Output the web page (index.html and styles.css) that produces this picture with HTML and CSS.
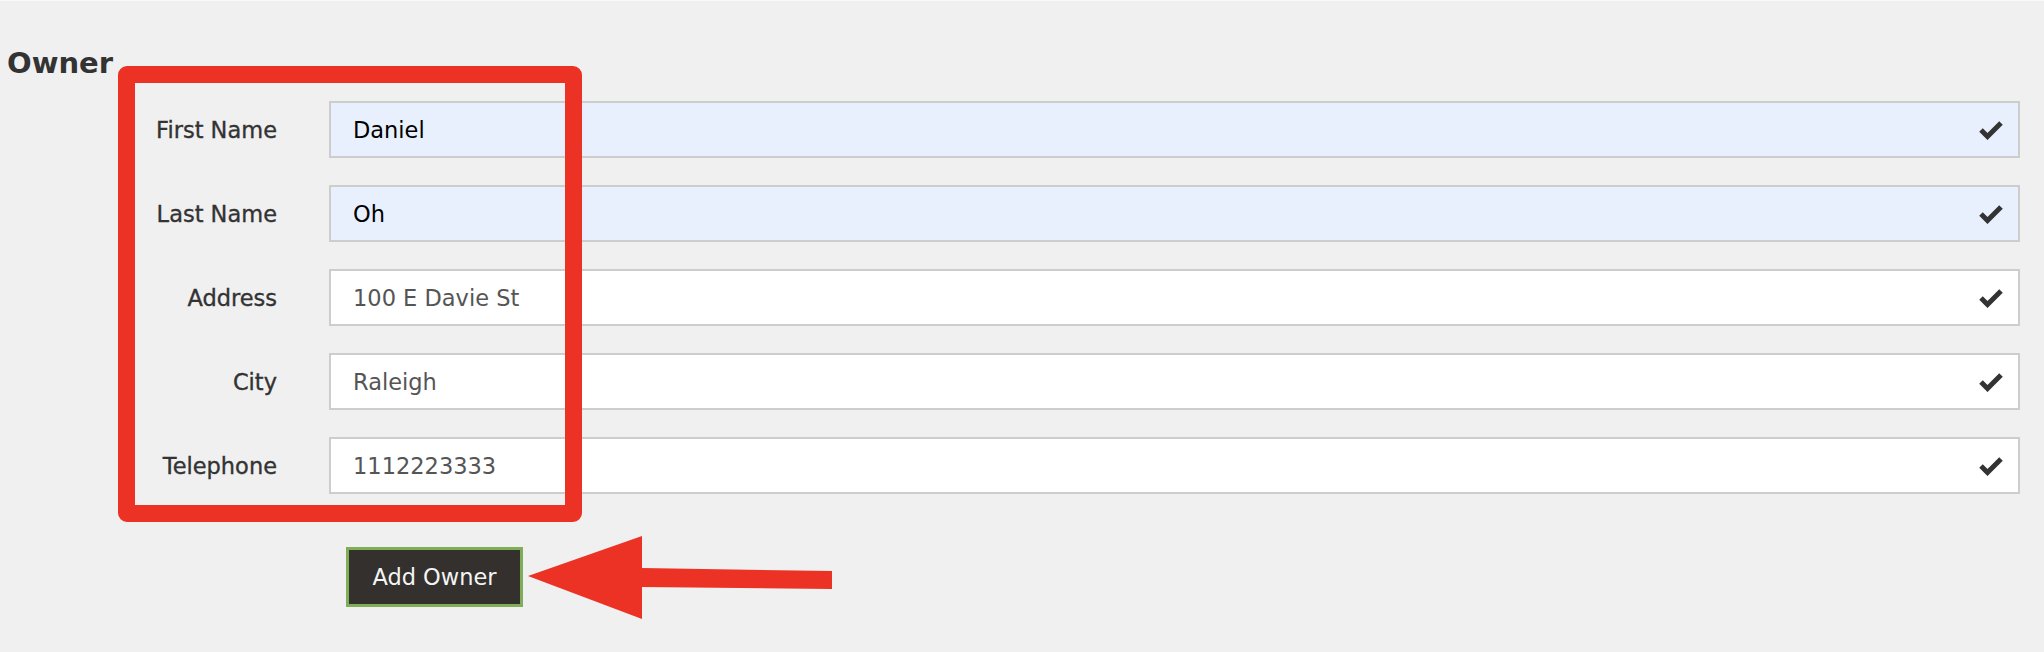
FILE: index.html
```html
<!DOCTYPE html>
<html lang="en">
<head>
<meta charset="utf-8">
<title>Owner</title>
<link rel="stylesheet" href="styles.css">
</head>
<body>
<main class="page">
  <h2 class="title">Owner</h2>
  <form class="owner-form">
    <div class="row">
      <label class="label">First Name</label>
      <div class="field autofill"><span class="value">Daniel</span><svg class="check" viewBox="0 0 24 20"><polyline points="2,10 8.5,16.5 22,3"/></svg></div>
    </div>
    <div class="row">
      <label class="label">Last Name</label>
      <div class="field autofill"><span class="value">Oh</span><svg class="check" viewBox="0 0 24 20"><polyline points="2,10 8.5,16.5 22,3"/></svg></div>
    </div>
    <div class="row">
      <label class="label">Address</label>
      <div class="field"><span class="value">100 E Davie St</span><svg class="check" viewBox="0 0 24 20"><polyline points="2,10 8.5,16.5 22,3"/></svg></div>
    </div>
    <div class="row">
      <label class="label">City</label>
      <div class="field"><span class="value">Raleigh</span><svg class="check" viewBox="0 0 24 20"><polyline points="2,10 8.5,16.5 22,3"/></svg></div>
    </div>
    <div class="row">
      <label class="label">Telephone</label>
      <div class="field"><span class="value">1112223333</span><svg class="check" viewBox="0 0 24 20"><polyline points="2,10 8.5,16.5 22,3"/></svg></div>
    </div>
    <div class="actions">
      <button type="button" class="btn">Add Owner</button>
    </div>
  </form>
  <div class="callout-box"></div>
  <svg class="callout-arrow" viewBox="0 0 320 95"><polygon points="8,46 122,6 122,38 312,41 312,59 122,57 122,89"/></svg>
</main>
</body>
</html>
```

FILE: styles.css
```css
html, body {
  margin: 0;
  padding: 0;
}

body {
  background: #f0f0f0;
  font-family: "DejaVu Sans", "Liberation Sans", sans-serif;
  color: #333;
}

.page {
  position: relative;
  height: 652px;
  box-sizing: border-box;
  padding: 48px 24px 0 7px;
  border-top: 1px solid #fafafa;
}

.title {
  margin: 0;
  font-size: 29px;
  line-height: 29px;
  font-weight: 700;
  color: #333;
}

.owner-form {
  margin-top: 23px;
  display: flex;
  flex-direction: column;
  gap: 27px;
}

.row {
  display: grid;
  grid-template-columns: 270px 1fr;
  column-gap: 52px;
  align-items: center;
}

.label {
  text-align: right;
  font-size: 22.5px;
  color: #333;
  -webkit-text-stroke: 0.35px #333;
}

.field {
  height: 57px;
  box-sizing: border-box;
  border: 2px solid #cdcdcd;
  background: #fff;
  display: flex;
  align-items: center;
  justify-content: space-between;
  padding: 0 15px 0 22px;
}

.field.autofill {
  background: #e8f0fe;
}

.value {
  font-size: 22.5px;
  color: #555;
}

.autofill .value {
  color: #000;
}

.check {
  width: 24px;
  height: 20px;
}

.check polyline {
  fill: none;
  stroke: #333;
  stroke-width: 5;
}

.actions {
  margin-top: 26px;
  padding-left: 339px;
}

.btn {
  width: 177px;
  height: 60px;
  box-sizing: border-box;
  padding: 0;
  background: #33302d;
  border: 3px solid #80ae58;
  color: #f4f4f4;
  font-family: "DejaVu Sans", "Liberation Sans", sans-serif;
  font-size: 22.5px;
}

.callout-box {
  position: absolute;
  left: 118px;
  top: 65px;
  width: 464px;
  height: 456px;
  box-sizing: border-box;
  border: 17px solid #ec3224;
  border-radius: 9px;
}

.callout-arrow {
  position: absolute;
  left: 520px;
  top: 529px;
  width: 320px;
  height: 95px;
}

.callout-arrow polygon {
  fill: #ec3224;
}
```
